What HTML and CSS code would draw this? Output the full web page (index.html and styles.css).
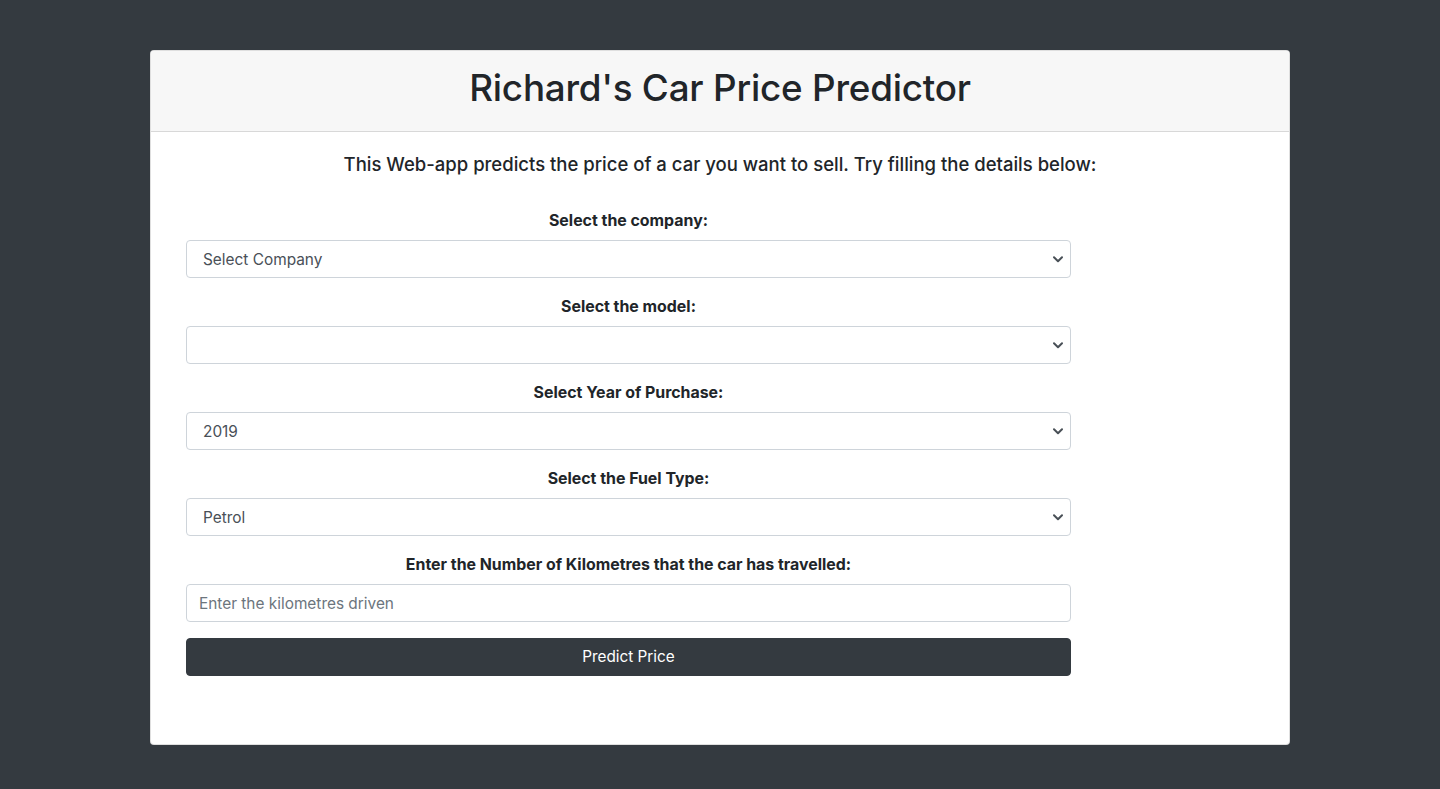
FILE: index.html
```html
<!DOCTYPE html>
<html lang="en">
<head>
<meta charset="utf-8">
<title>Richard's Car Price Predictor</title>
<link rel="stylesheet" href="styles.css">
</head>
<body>
<div class="container">
  <div class="card">
    <div class="card-header">
      <h1>Richard's Car Price Predictor</h1>
    </div>
    <div class="card-body">
      <h5 class="intro">This Web-app predicts the price of a car you want to sell. Try filling the details below:</h5>
      <form class="form">
        <div class="group">
          <label>Select the company:</label>
          <select class="control select"><option>Select Company</option></select>
        </div>
        <div class="group">
          <label>Select the model:</label>
          <select class="control select"><option></option></select>
        </div>
        <div class="group">
          <label>Select Year of Purchase:</label>
          <select class="control select"><option>2019</option></select>
        </div>
        <div class="group">
          <label>Select the Fuel Type:</label>
          <select class="control select"><option>Petrol</option></select>
        </div>
        <div class="group">
          <label>Enter the Number of Kilometres that the car has travelled:</label>
          <input class="control input" type="text" placeholder="Enter the kilometres driven">
        </div>
        <div class="group">
          <button type="button" class="btn">Predict Price</button>
        </div>
      </form>
    </div>
  </div>
</div>
</body>
</html>
```
FILE: styles.css
```css
* { box-sizing: border-box; }
html, body { margin: 0; padding: 0; }
body {
  background: #343a40;
  font-family: Inter, "Noto Sans", "Liberation Sans", sans-serif;
  color: #212529;
  font-size: 16px;
  line-height: 1.5;
  height: 789px;
}
.container {
  width: 1140px;
  margin: 0 auto;
  padding-top: 50px;
}
.card {
  background: #fff;
  border: 1px solid rgba(0,0,0,.125);
  border-radius: 4px;
  overflow: hidden;
}
.card-header {
  background: #f7f7f7;
  border-bottom: 1px solid rgba(0,0,0,.125);
  padding: 13px 20px 12px;
  text-align: center;
}
.card-header h1 {
  margin: 0 0 7px;
  font-size: 36.8px;
  font-weight: 500;
  line-height: 48px;
  letter-spacing: -0.2px;
}
.card-body {
  padding: 20px 20px 68px;
}
.intro {
  margin: 0 0 32px;
  font-size: 18.5px;
  font-weight: 500;
  line-height: 24px;
  text-align: center;
}
.form {
  width: 885px;
  margin-left: 15px;
}
.group {
  margin-bottom: 16px;
  display: flex;
  flex-direction: column;
}
.group:last-child { margin-bottom: 0; }
label {
  display: block;
  text-align: center;
  font-weight: 700;
  font-size: 15.9px;
  line-height: 25px;
  margin-bottom: 7px;
}
.control {
  display: block;
  width: 100%;
  height: 38px;
  border: 1px solid #ced4da;
  border-radius: 4px;
  background-color: #fff;
  font-family: inherit;
  font-size: 15.4px;
  color: #495057;
  outline: none;
}
.select {
  -webkit-appearance: none;
  appearance: none;
  padding: 0 32px 0 16px;
  background-image: url("data:image/svg+xml;utf8,<svg xmlns='http://www.w3.org/2000/svg' width='10' height='7' viewBox='0 0 10 7'><path d='M1 1.2 L5 5.2 L9 1.2' fill='none' stroke='%23495057' stroke-width='2' stroke-linecap='round' stroke-linejoin='round'/></svg>");
  background-repeat: no-repeat;
  background-position: right 7px center;
  background-size: 10px 7px;
}
.input {
  padding: 0 12px;
}
.input::placeholder { color: #6c757d; opacity: 1; }
.btn {
  display: block;
  width: 100%;
  height: 38px;
  border: 1px solid #343a40;
  background: #343a40;
  color: #fff;
  border-radius: 4px;
  font-family: inherit;
  font-size: 15.3px;
  font-weight: 400;
  line-height: 24px;
}
```
